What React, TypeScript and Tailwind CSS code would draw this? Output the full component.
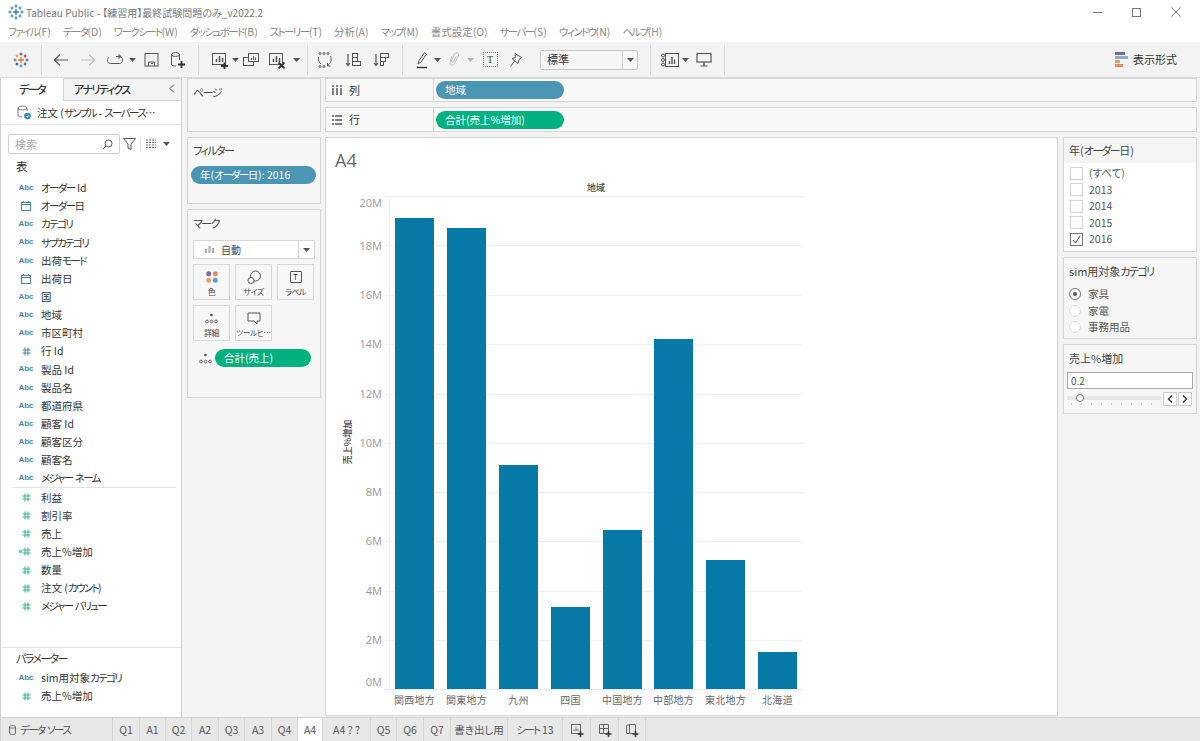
import type { ReactNode } from 'react';

const font = { fontFamily: '"Noto Sans CJK JP", "Noto Sans", sans-serif' };

const menus = [
  'ファイル(F)', 'データ(D)', 'ワークシート(W)', 'ダッシュボード(B)', 'ストーリー(T)', '分析(A)',
  'マップ(M)', '書式設定(O)', 'サーバー(S)', 'ウィンドウ(N)', 'ヘルプ(H)',
];

const dimensions: [string, string][] = [
  ['abc', 'オーダー Id'], ['date', 'オーダー日'], ['abc', 'カテゴリ'], ['abc', 'サブカテゴリ'],
  ['abc', '出荷モード'], ['date', '出荷日'], ['abc', '国'], ['abc', '地域'], ['abc', '市区町村'],
  ['numBlue', '行 Id'], ['abc', '製品 Id'], ['abc', '製品名'], ['abc', '都道府県'], ['abc', '顧客 Id'],
  ['abc', '顧客区分'], ['abc', '顧客名'], ['abc', 'メジャー ネーム'],
];

const measures = ['利益', '割引率', '売上', '売上%増加', '数量', '注文 (カウント)', 'メジャー バリュー'];

const bars = [
  { name: '関西地方', x: 395, top: 218 },
  { name: '関東地方', x: 447, top: 228 },
  { name: '九州', x: 499, top: 465 },
  { name: '四国', x: 551, top: 607 },
  { name: '中国地方', x: 603, top: 530 },
  { name: '中部地方', x: 654, top: 339 },
  { name: '東北地方', x: 706, top: 560 },
  { name: '北海道', x: 758, top: 652 },
];

const ticks = [
  { label: '20M', y: 196, textY: 207 },
  { label: '18M', y: 245, textY: 250 },
  { label: '16M', y: 295, textY: 299 },
  { label: '14M', y: 344, textY: 348 },
  { label: '12M', y: 394, textY: 398 },
  { label: '10M', y: 443, textY: 447 },
  { label: '8M', y: 492, textY: 496 },
  { label: '6M', y: 541, textY: 545 },
  { label: '4M', y: 591, textY: 595 },
  { label: '2M', y: 640, textY: 644 },
  { label: '0M', y: 689, textY: 686 },
];

const tabs = [
  { name: 'Q1', w: 'w-[27px]' }, { name: 'A1', w: 'w-[26px]' }, { name: 'Q2', w: 'w-[26px]' },
  { name: 'A2', w: 'w-[27px]' }, { name: 'Q3', w: 'w-[26px]' }, { name: 'A3', w: 'w-[27px]' },
  { name: 'Q4', w: 'w-[26px]' }, { name: 'A4', w: 'w-[25px]', active: true }, { name: 'A4 ? ?', w: 'w-[48px]' },
  { name: 'Q5', w: 'w-[26px]' }, { name: 'Q6', w: 'w-[27px]' }, { name: 'Q7', w: 'w-[27px]' },
  { name: '書き出し用', w: 'w-[57px]' }, { name: 'シート 13', w: 'w-[55px]' },
];

// katakana in the reference is much narrower than in Noto, so tighten just those runs
function Jp({ text }: { text: string }) {
  const parts = text.split(/([\u30A0-\u30FF]+)/);
  return (
    <>
      {parts.map((p, i) =>
        /^[\u30A0-\u30FF]/.test(p) ? (
          <span key={i} className="tracking-[-1.6px]">{p}</span>
        ) : (
          <span key={i}>{p}</span>
        ),
      )}
    </>
  );
}

function Caret({ className = '' }: { className?: string }) {
  return (
    <svg width="7" height="4" viewBox="0 0 7 4" className={`shrink-0 ${className}`}>
      <path d="M0 0H7L3.5 4Z" fill="#555" />
    </svg>
  );
}

function Plus({ cx, cy, r, color, sw = 1.2 }: { cx: number; cy: number; r: number; color: string; sw?: number }) {
  return <path d={`M${cx - r} ${cy}H${cx + r}M${cx} ${cy - r}V${cy + r}`} stroke={color} strokeWidth={sw} fill="none" />;
}

function Logo({ mono }: { mono?: boolean }) {
  const c = (v: string) => (mono ? '#2f7fb3' : v);
  return (
    <svg width="16" height="16" viewBox="0 0 16 16">
      <Plus cx={8} cy={8} r={3} color={c('#e8762d')} sw={1.4} />
      <Plus cx={8} cy={2} r={1.6} color={c('#2b5c8a')} />
      <Plus cx={8} cy={14} r={1.6} color={c('#5b879b')} />
      <Plus cx={2} cy={8} r={1.6} color={c('#59879b')} />
      <Plus cx={14} cy={8} r={1.6} color={c('#5b6591')} />
      <Plus cx={4} cy={4} r={1.4} color={c('#eb912b')} />
      <Plus cx={12} cy={4} r={1.4} color={c('#c72035')} />
      <Plus cx={4} cy={12} r={1.4} color={c('#1f447a')} />
      <Plus cx={12} cy={12} r={1.4} color={c('#2b5c8a')} />
    </svg>
  );
}

function Ico({ w = 18, h = 18, children, stroke = '#555' }: { w?: number; h?: number; children: ReactNode; stroke?: string }) {
  return (
    <svg width={w} height={h} viewBox={`0 0 ${w} ${h}`} fill="none" stroke={stroke} strokeWidth="1" className="shrink-0">
      {children}
    </svg>
  );
}

function Tool({ className, children }: { className: string; children: ReactNode }) {
  return <div className={`flex items-center justify-center h-full shrink-0 ${className}`}>{children}</div>;
}

function Sep() {
  return <div className="w-px h-[30px] bg-[#d8d8d8] shrink-0" />;
}

function Chart({ color }: { color: string }) {
  return (
    <>
      <rect x="1.5" y="2.5" width="13" height="11" />
      <path d="M5.5 11V8M8.5 11V5M11.5 11V7" stroke={color} strokeWidth="1.5" />
    </>
  );
}

function Toolbar() {
  return (
    <div className="h-[36px] flex items-center bg-[#f3f3f3] border-b border-[#d9d9d9] shrink-0">
      <Tool className="w-[41px]"><Logo /></Tool>
      <Sep />
      <Tool className="w-[24px] ml-[7px]">
        <Ico w={16} h={14}><path d="M15 7H1.5M7 1.5L1.5 7L7 12.5" strokeWidth="1.2" /></Ico>
      </Tool>
      <Tool className="w-[24px] ml-[3px]">
        <Ico w={16} h={14} stroke="#bdbdbd"><path d="M1 7H14.5M9 1.5L14.5 7L9 12.5" strokeWidth="1.2" /></Ico>
      </Tool>
      <Tool className="w-[24px] ml-[3px]">
        <Ico w={18} h={12}>
          <path d="M13 2.5H13.5C15.5 2.5 16.5 4 16.5 6C16.5 8 15.5 9.5 13.5 9.5H4.5C2.5 9.5 1.5 8 1.5 6C1.5 5 2 4 3 3.5M13 0.5V4.5L15 2.5Z" />
          <path d="M10 2.5H13" />
        </Ico>
      </Tool>
      <Tool className="w-[10px]"><Caret /></Tool>
      <Tool className="w-[24px] ml-[2px]">
        <Ico w={15} h={15}><rect x="1" y="1.5" width="13" height="12.5" /><path d="M4.5 14V10H10.5V14" /><path d="M7 11.5H9" /></Ico>
      </Tool>
      <Tool className="w-[24px] ml-[3px]">
        <Ico w={16} h={18}>
          <path d="M1.5 3.5C1.5 1 9.5 1 9.5 3.5V9M1.5 3.5V13C1.5 14.5 3.5 15 6 15M1.5 3.5C1.5 6 9.5 6 9.5 3.5" />
          <path d="M8 13.5H15M11.5 10V17" strokeWidth="1.8" stroke="#333" />
        </Ico>
      </Tool>
      <div className="w-[8px] shrink-0" />
      <Sep />
      <Tool className="w-[24px] ml-[9px]">
        <Ico w={18} h={18}><Chart color="#555" /><path d="M10 15H17M13.5 11.5V18" strokeWidth="1.8" stroke="#333" /></Ico>
      </Tool>
      <Tool className="w-[6px]"><Caret /></Tool>
      <Tool className="w-[24px] ml-[1px]">
        <Ico w={18} h={18}>
          <rect x="1.5" y="6.5" width="10" height="8" />
          <rect x="6.5" y="2.5" width="10" height="8" fill="#f3f3f3" />
          <path d="M9.5 9V7M11.5 9V5M13.5 9V6.5" />
        </Ico>
      </Tool>
      <Tool className="w-[24px] ml-[2px]">
        <Ico w={18} h={18}><Chart color="#555" /><path d="M10.5 11.5L16.5 17.5M16.5 11.5L10.5 17.5" strokeWidth="1.8" stroke="#333" /></Ico>
      </Tool>
      <Tool className="w-[10px] ml-[2px]"><Caret /></Tool>
      <div className="w-[6px] shrink-0" />
      <Sep />
      <Tool className="w-[24px] ml-[5px]">
        <Ico w={16} h={16}>
          <circle cx="3" cy="1.5" r="1" /><circle cx="7" cy="1.5" r="1" /><circle cx="11" cy="1.5" r="1" />
          <circle cx="3" cy="14.5" r="1" /><circle cx="7" cy="14.5" r="1" />
          <path d="M1.5 5C1 8 2 10.5 4 12M13.5 4C15 8 14 11 10.5 13.5M10.5 11V14H13.5" />
        </Ico>
      </Tool>
      <Tool className="w-[24px] ml-[4px]">
        <Ico w={16} h={16}>
          <path d="M3 2V13M1 11L3 13.5L5 11" strokeWidth="1.2" />
          <rect x="7.5" y="1.5" width="5" height="4" />
          <rect x="7.5" y="5.5" width="5" height="4" />
          <rect x="7.5" y="9.5" width="8" height="4" />
        </Ico>
      </Tool>
      <Tool className="w-[24px] ml-[4px]">
        <Ico w={16} h={16}>
          <path d="M3 2V13M1 11L3 13.5L5 11" strokeWidth="1.2" />
          <rect x="7.5" y="1.5" width="8" height="4" />
          <rect x="7.5" y="5.5" width="5" height="4" />
          <rect x="7.5" y="9.5" width="3" height="4" />
        </Ico>
      </Tool>
      <div className="w-[9px] shrink-0" />
      <Sep />
      <Tool className="w-[20px] ml-[9px]">
        <Ico w={12} h={18}>
          <path d="M2 13L3 9.5L8.5 1.5L10.5 3L5 11Z" />
          <path d="M1 16.5H11" strokeWidth="1.4" stroke="#333" />
        </Ico>
      </Tool>
      <Tool className="w-[10px]"><Caret /></Tool>
      <Tool className="w-[20px] ml-[2px]">
        <Ico w={12} h={17} stroke="#c0c0c0">
          <path d="M4 5L2 11C1.5 14 4.5 15.5 6 13L10.5 5C11.5 2 8 0.5 6.5 3L3.5 9.5C3 11 5 11.5 5.5 10.5L8.5 5" />
        </Ico>
      </Tool>
      <Tool className="w-[13px]"><Caret className="opacity-40" /></Tool>
      <Tool className="w-[20px] ml-[3px]">
        <div className="w-[15px] h-[15px] border border-dotted border-[#777] flex items-center justify-center text-[10px] leading-none text-[#444]" style={{ fontFamily: '"Liberation Serif", serif' }}>T</div>
      </Tool>
      <Tool className="w-[20px] ml-[6px]">
        <Ico w={14} h={16}>
          <path d="M6 1.5L12.5 5.5L10 7.5L9 11.5L3 6.5L6.5 5.5ZM5.5 9L1.5 14.5" />
        </Ico>
      </Tool>
      <div className="w-[98px] h-[20px] ml-[14px] shrink-0 flex items-center bg-[#f6f6f6] border border-[#c8c8c8] rounded-[2px]">
        <span className="flex-1 pl-[6px] text-[11px] text-[#333]">標準</span>
        <span className="w-[15px] h-full border-l border-[#d5d5d5] flex items-center justify-center"><Caret /></span>
      </div>
      <div className="w-[12px] shrink-0" />
      <Sep />
      <Tool className="w-[20px] ml-[9px]">
        <Ico w={18} h={14}>
          <circle cx="2" cy="2.5" r="1.5" /><circle cx="2" cy="7" r="1.5" /><circle cx="2" cy="11.5" r="1.5" />
          <rect x="4.5" y="0.5" width="13" height="13" />
          <path d="M8.5 11V8M11 11V4M13.5 11V6.5" strokeWidth="1.4" />
        </Ico>
      </Tool>
      <Tool className="w-[10px]"><Caret /></Tool>
      <Tool className="w-[20px] ml-[4px]">
        <Ico w={16} h={15}>
          <rect x="1" y="1.5" width="14" height="8.5" strokeWidth="1.2" />
          <path d="M8 10V14M4.5 14H11.5" strokeWidth="1.2" />
        </Ico>
      </Tool>
      <div className="w-[10px] shrink-0" />
      <Sep />
      <div className="flex-1" />
      <div className="flex items-center gap-[5px] mr-[23px]">
        <div className="flex flex-col gap-px">
          <div className="w-[10px] h-[3px] bg-[#7b6a9c]" />
          <div className="w-[13px] h-[3px] bg-[#85afcc]" />
          <div className="w-[5px] h-[3px] bg-[#ef9a5f]" />
          <div className="w-[8px] h-[3px] bg-[#e58a68]" />
        </div>
        <span className="text-[11px] text-[#333]">表示形式</span>
      </div>
    </div>
  );
}

function FieldIcon({ kind }: { kind: string }) {
  if (kind === 'abc') {
    return <span className="text-[8px] font-bold text-[#4a86a4]" style={{ fontFamily: '"Liberation Sans", sans-serif' }}>Abc</span>;
  }
  if (kind === 'date') {
    return (
      <Ico w={10} h={10} stroke="#4a86a4">
        <rect x="0.5" y="1.5" width="9" height="8" /><path d="M0.5 3.5H9.5M2.5 0V2M7.5 0V2" />
      </Ico>
    );
  }
  const stroke = kind === 'numBlue' ? '#4a86a4' : '#3fae86';
  return (
    <Ico w={9} h={9} stroke={stroke}>
      <path d="M3 0.5V8.5M6 0.5V8.5M0.5 3H8.5M0.5 6H8.5" />
    </Ico>
  );
}

function Field({ kind, name, calc }: { kind: string; name: string; calc?: boolean }) {
  return (
    <div className="flex items-center h-[18.15px] text-[10.5px] text-[#333] whitespace-nowrap">
      <div className="w-[40px] pl-[10px] flex items-center justify-center shrink-0 relative">
        {calc ? <span className="absolute left-[18px] top-[3px] w-[3px] h-[3px] bg-[#7cc8ac]" /> : null}
        <FieldIcon kind={kind} />
      </div>
      <span><Jp text={name} /></span>
    </div>
  );
}

function Sidebar() {
  return (
    <div className="w-[182px] h-full bg-white border-l border-r border-[#cfcfcf] flex flex-col shrink-0">
      <div className="flex h-[23px] shrink-0 text-[11px] font-medium text-[#333]">
        <div className="w-[62px] flex items-center justify-center"><span><Jp text="データ" /></span></div>
        <div className="flex-1 flex items-center bg-[#f3f3f3] border-l border-b border-t border-[#d4d4d4] pl-[10px] relative">
          <span><Jp text="アナリティクス" /></span>
          <svg width="6" height="9" viewBox="0 0 6 9" className="absolute right-[6px] top-[5px]" fill="none" stroke="#555">
            <path d="M5 0.5L1 4.5L5 8.5" />
          </svg>
        </div>
      </div>
      <div className="h-[24px] flex items-center border-b border-[#e3e3e3] shrink-0 pl-[16px] gap-[6px] text-[10.5px] text-[#333]">
        <svg width="14" height="15" viewBox="0 0 14 15" fill="none" stroke="#777">
          <path d="M1 3C1 0.5 10 0.5 10 3V6M1 3V10C1 11.5 3 12 5 12M1 3C1 5.5 10 5.5 10 3" />
          <circle cx="10.5" cy="11" r="3.3" fill="#2f86c2" stroke="none" />
          <path d="M9 11L10.2 12.2L12 10" stroke="#fff" />
        </svg>
        <span className="whitespace-nowrap"><Jp text="注文 (サンプル - スーパース…" /></span>
      </div>
      <div className="flex items-center h-[20px] mt-[9px] pl-[7px] shrink-0">
        <div className="w-[112px] h-[20px] border border-[#cfcfcf] rounded-[2px] flex items-center justify-between px-[6px] text-[11px] text-[#aaa]">
          検索
          <svg width="11" height="11" viewBox="0 0 11 11" fill="none" stroke="#555">
            <circle cx="6.5" cy="4.5" r="3.5" /><path d="M4 7L1 10" />
          </svg>
        </div>
        <svg width="13" height="12" viewBox="0 0 13 12" fill="none" stroke="#555" className="ml-[3px]">
          <path d="M0.5 0.5H12.5L8 6V11.5L5 10V6Z" />
        </svg>
        <div className="w-px h-[15px] bg-[#ddd] ml-[4px]" />
        <svg width="12" height="10" viewBox="0 0 12 10" stroke="#666" className="ml-[4px]">
          <path d="M1 1H11M1 3.5H11M1 6H11M1 8.5H11" strokeDasharray="2 1" />
        </svg>
        <Caret className="ml-[6px]" />
      </div>
      <div className="h-[24px] mt-[1px] pl-[15px] flex items-center text-[11.5px] text-[#333] shrink-0">表</div>
      <div className="flex flex-col shrink-0">
        {dimensions.map(([kind, name]) => (
          <Field key={name} kind={kind} name={name} />
        ))}
      </div>
      <div className="h-px bg-[#e3e3e3] ml-[13px] mr-[5px] shrink-0" />
      <div className="flex flex-col shrink-0">
        {measures.map((name) => (
          <Field key={name} kind="num" name={name} calc={name === '売上%増加'} />
        ))}
      </div>
      <div className="flex-1" />
      <div className="border-t border-[#e3e3e3] h-[70px] shrink-0">
        <div className="h-[21px] pl-[15px] flex items-center text-[11px] text-[#333]"><span><Jp text="パラメーター" /></span></div>
        <Field kind="abc" name="sim用対象カテゴリ" />
        <Field kind="num" name="売上%増加" />
      </div>
    </div>
  );
}

function Pill({ color, children, className = '' }: { color: string; children: ReactNode; className?: string }) {
  return (
    <div className={`h-[18px] rounded-full flex items-center pl-[9px] text-[10.5px] text-white whitespace-nowrap ${color} ${className}`}>
      <span>{children}</span>
    </div>
  );
}

function MarkButton({ label, small, children }: { label: string; small?: boolean; children: ReactNode }) {
  return (
    <div className="w-[37px] h-[36px] bg-[#f7f7f7] border border-[#d8d8d8] flex flex-col items-center pt-[4px]">
      <div className="h-[16px] flex items-center justify-center">{children}</div>
      <span className={`leading-[14px] text-[#444] whitespace-nowrap ${small ? 'text-[7.5px] tracking-[-0.2px]' : 'text-[8px] tracking-[-0.6px]'}`}>{label}</span>
    </div>
  );
}

function Dots() {
  return (
    <Ico w={13} h={11} stroke="#666">
      <circle cx="6.5" cy="2" r="1.3" fill="#555" stroke="none" />
      <circle cx="2" cy="8.5" r="1.4" /><circle cx="6.5" cy="8.5" r="1.4" /><circle cx="11" cy="8.5" r="1.4" />
    </Ico>
  );
}

function CardsColumn() {
  return (
    <div className="w-[134px] flex flex-col gap-[5px] ml-[5px] shrink-0">
      <div className="h-[54px] bg-[#f6f6f6] border border-[#d4d4d4] px-[5px] pt-[5px] text-[11px] text-[#444]"><Jp text="ページ" /></div>
      <div className="h-[67px] bg-[#f6f6f6] border border-[#d4d4d4] flex flex-col">
        <div className="px-[5px] pt-[4px] h-[28px] text-[11px] text-[#444]"><Jp text="フィルター" /></div>
        <Pill color="bg-[#4a95b3]" className="w-[125px] ml-[3px]"><Jp text="年(オーダー日): 2016" /></Pill>
      </div>
      <div className="h-[189px] bg-[#f6f6f6] border border-[#d4d4d4] flex flex-col">
        <div className="px-[5px] pt-[5px] h-[30px] text-[11px] text-[#444]"><Jp text="マーク" /></div>
        <div className="mx-[5px] h-[19px] bg-white border border-[#d4d4d4] rounded-[1px] flex items-center">
          <svg width="9" height="7" viewBox="0 0 9 7" className="ml-[11px]" fill="#aaa">
            <rect x="0" y="3" width="2" height="4" /><rect x="3.5" y="0" width="2" height="7" /><rect x="7" y="2" width="2" height="5" />
          </svg>
          <span className="flex-1 pl-[7px] text-[10px] text-[#444]">自動</span>
          <span className="w-[16px] h-full border-l border-[#d4d4d4] flex items-center justify-center"><Caret /></span>
        </div>
        <div className="grid grid-cols-[37px_37px_37px] gap-x-[5px] gap-y-[5px] mx-[5px] mt-[5px]">
          <MarkButton label="色">
            <svg width="12" height="12" viewBox="0 0 12 12">
              <circle cx="2.7" cy="2.7" r="2.5" fill="#7b6a9c" /><circle cx="9.3" cy="2.7" r="2.5" fill="#e58a5f" />
              <circle cx="2.7" cy="9.3" r="2.5" fill="#ef9a5f" /><circle cx="9.3" cy="9.3" r="2.5" fill="#5f9bcb" />
            </svg>
          </MarkButton>
          <MarkButton label="サイズ">
            <Ico w={14} h={14}><circle cx="8.5" cy="6" r="5" /><circle cx="4" cy="10.5" r="3" fill="#f7f7f7" /></Ico>
          </MarkButton>
          <MarkButton label="ラベル">
            <div className="w-[12px] h-[12px] border border-[#555] rounded-[1px] flex items-center justify-center text-[8px] leading-none text-[#333]">T</div>
          </MarkButton>
          <MarkButton label="詳細"><Dots /></MarkButton>
          <MarkButton label="ツールヒ…" small>
            <Ico w={14} h={13}><path d="M1 1H13V9H10V12L7 9H1Z" /></Ico>
          </MarkButton>
        </div>
        <div className="flex items-center mt-[8px] pl-[11px]">
          <Dots />
          <Pill color="bg-[#00b180]" className="w-[96px] ml-[3px]">合計(売上)</Pill>
        </div>
      </div>
    </div>
  );
}

function Shelf({ label, icon, className, children }: { label: string; icon: ReactNode; className: string; children: ReactNode }) {
  return (
    <div className={`flex bg-[#f8f8f8] border border-[#d4d4d4] ${className}`}>
      <div className="w-[108px] flex items-center pl-[6px] gap-[7px] text-[11px] text-[#333] border-r border-[#d4d4d4]">
        {icon}
        {label}
      </div>
      <div className="flex items-center pl-[2px]">{children}</div>
    </div>
  );
}

function Viz() {
  return (
    <div className="w-[733px] h-[579px] bg-white border border-[#d4d4d4] flex flex-col shrink-0">
      <div className="h-[44px] pl-[9px] pt-[8px] text-[18px] leading-[28px] text-[#666] shrink-0" style={{ fontFamily: '"Open Sans", sans-serif' }}>A4</div>
      <svg width="731" height="533" viewBox="326 182 731 533" className="block" style={font}>
        {ticks.map((t) => (
          <g key={t.label}>
            <path d={`M385 ${t.y + 0.5}H803`} stroke="#f1f1f1" />
            <text x="382" y={t.textY} textAnchor="end" fontSize="11" fill="#999" style={{ fontFamily: '"Open Sans", sans-serif' }}>{t.label}</text>
          </g>
        ))}
        <path d="M389.5 196V689" stroke="#efefef" />
        {bars.map((b) => (
          <rect key={b.name} x={b.x} y={b.top} width={39} height={689 - b.top} fill="#0779a6" />
        ))}
        <path d="M385 689.5H803" stroke="#e9e9e9" />
        {bars.map((b) => (
          <text key={b.name} x={b.x + 19.5} y={704} textAnchor="middle" fontSize="10" fill="#666" letterSpacing="0.3">{b.name}</text>
        ))}
        <text x="596" y="191" textAnchor="middle" fontSize="9" fontWeight="500" fill="#444">地域</text>
        <text transform="translate(351 442) rotate(-90)" textAnchor="middle" fontSize="9" fontWeight="500" fill="#444">売上%増加</text>
      </svg>
    </div>
  );
}

function Check({ label, checked }: { label: string; checked?: boolean }) {
  return (
    <div className="flex items-center h-[16.5px] gap-[6px] pl-[6px] text-[10.5px] text-[#555]">
      <div className={`w-[13px] h-[13px] bg-white border flex items-center justify-center ${checked ? 'border-[#777]' : 'border-[#d4d4d4]'}`}>
        {checked ? (
          <svg width="9" height="9" viewBox="0 0 9 9" fill="none" stroke="#444"><path d="M1 5L3.5 8L8 1" /></svg>
        ) : null}
      </div>
      <span>{label}</span>
    </div>
  );
}

function Radio({ label, checked }: { label: string; checked?: boolean }) {
  return (
    <div className="flex items-center h-[16.5px] gap-[7px] pl-[5px] text-[10.5px] text-[#555]">
      <div className={`w-[12px] h-[12px] rounded-full bg-white border flex items-center justify-center ${checked ? 'border-[#777]' : 'border-[#ddd]'}`}>
        {checked ? <div className="w-[4px] h-[4px] rounded-full bg-[#555]" /> : null}
      </div>
      <span>{label}</span>
    </div>
  );
}

function StepButton({ d }: { d: string }) {
  return (
    <div className="w-[14px] h-[14px] bg-white border border-[#ccc] flex items-center justify-center">
      <svg width="6" height="8" viewBox="0 0 6 8" fill="none" stroke="#333" strokeWidth="1.4"><path d={d} /></svg>
    </div>
  );
}

function RightColumn() {
  return (
    <div className="w-[134px] flex flex-col gap-[5px] ml-[5px] shrink-0">
      <div className="h-[115px] bg-white border border-[#d4d4d4]">
        <div className="h-[25px] bg-[#f5f5f5] pl-[5px] flex items-center text-[11px] text-[#444]"><span><Jp text="年(オーダー日)" /></span></div>
        <div className="pt-[2px]">
          <Check label="(すべて)" />
          <Check label="2013" />
          <Check label="2014" />
          <Check label="2015" />
          <Check label="2016" checked />
        </div>
      </div>
      <div className="h-[82px] bg-[#f6f6f6] border border-[#d4d4d4]">
        <div className="h-[27px] pl-[5px] flex items-center text-[11px] text-[#444]"><span><Jp text="sim用対象カテゴリ" /></span></div>
        <div className="pt-[1px]">
          <Radio label="家具" checked />
          <Radio label="家電" />
          <Radio label="事務用品" />
        </div>
      </div>
      <div className="h-[70px] bg-[#f6f6f6] border border-[#d4d4d4]">
        <div className="h-[27px] pl-[5px] flex items-center text-[11px] text-[#444]">売上%増加</div>
        <div className="mx-[3px] h-[17px] bg-white border border-[#a8a8a8] pl-[3px] flex items-center text-[10px] text-[#555]">0.2</div>
        <div className="flex items-start mx-[3px] mt-[3px]">
          <div className="w-[94px] h-[14px] relative">
            <div className="absolute left-0 right-0 top-[4px] h-[4px] bg-[#e6e6e6]" />
            <div className="absolute left-[9px] top-[2px] w-[8px] h-[8px] rounded-full bg-white border border-[#777]" />
            <div className="absolute left-[4px] right-[2px] top-[11px] h-[2px] bg-[repeating-linear-gradient(90deg,#ccc_0,#ccc_1px,transparent_1px,transparent_10px)]" />
          </div>
          <div className="flex gap-px ml-[2px]">
            <StepButton d="M5 0.5L1.5 4L5 7.5" />
            <StepButton d="M1 0.5L4.5 4L1 7.5" />
          </div>
        </div>
      </div>
    </div>
  );
}

function TabIcon({ kind }: { kind: 'sheet' | 'dash' | 'story' }) {
  return (
    <Ico w={14} h={14} stroke="#666">
      {kind === 'sheet' ? <><rect x="1.5" y="1.5" width="9" height="9" /><path d="M4 8V6.5M6 8V4.5M8 8V6" /></> : null}
      {kind === 'dash' ? <path d="M1.5 1.5H10.5V10.5H1.5ZM1.5 5.5H10.5M5.5 1.5V10.5" /> : null}
      {kind === 'story' ? <path d="M1.5 2.5L4.5 1.5V10.5L1.5 10.5ZM4.5 1.5H10.5V9M4.5 10.5H8" /> : null}
      <path d="M7.5 11H13.5M10.5 8V14" strokeWidth="1.5" stroke="#333" />
    </Ico>
  );
}

function TabBar() {
  return (
    <div className="h-[24px] flex bg-[#e8e8e8] border-t border-[#cfcfcf] shrink-0 text-[10.5px] text-[#555] overflow-hidden">
      <div className="w-[113px] flex items-center pl-[8px] gap-[4px] border-l border-r border-[#d2d2d2] whitespace-nowrap shrink-0">
        <svg width="7" height="10" viewBox="0 0 7 10" fill="none" stroke="#666">
          <path d="M0.5 2C0.5 0 6.5 0 6.5 2V8C6.5 10 0.5 10 0.5 8ZM0.5 2C0.5 3.5 6.5 3.5 6.5 2" />
        </svg>
        <span><Jp text="データ ソース" /></span>
      </div>
      {tabs.map((t) => (
        <div key={t.name} className={`${t.w} flex items-center justify-center border-r border-[#d6d6d6] whitespace-nowrap shrink-0 ${t.active ? 'bg-white' : ''}`}>
          <span><Jp text={t.name} /></span>
        </div>
      ))}
      <div className="w-[28px] flex items-center justify-center border-r border-[#d6d6d6] shrink-0"><TabIcon kind="sheet" /></div>
      <div className="w-[28px] flex items-center justify-center border-r border-[#d6d6d6] shrink-0"><TabIcon kind="dash" /></div>
      <div className="w-[27px] flex items-center justify-center border-r border-[#d6d6d6] shrink-0"><TabIcon kind="story" /></div>
    </div>
  );
}

export default function App() {
  return (
    <div className="w-[1200px] h-[741px] flex flex-col bg-[#f3f3f3] overflow-hidden [font-feature-settings:'palt']" style={font}>
      <div className="h-[21px] bg-white flex items-center shrink-0 pl-[8px] pt-[3px] relative">
        <Logo mono />
        <span className="ml-[2px] text-[10px] text-[#777] whitespace-nowrap">Tableau Public - 【練習用】最終試験問題のみ_v2022.2</span>
        <div className="ml-auto flex items-center">
          <div className="w-[39px] flex justify-center"><div className="w-[9px] h-px bg-[#777]" /></div>
          <div className="w-[39px] flex justify-center"><div className="w-[9px] h-[9px] border border-[#777]" /></div>
          <div className="w-[39px] flex justify-center">
            <svg width="10" height="10" viewBox="0 0 10 10" stroke="#777"><path d="M0.5 0.5L9.5 9.5M9.5 0.5L0.5 9.5" /></svg>
          </div>
          <div className="w-[5px]" />
        </div>
      </div>
      <div className="h-[21px] bg-white flex items-center gap-[12px] pl-[8px] shrink-0 text-[10.5px] text-[#888] whitespace-nowrap">
        {menus.map((m) => (
          <span key={m}><Jp text={m} /></span>
        ))}
      </div>
      <Toolbar />
      <div className="flex-1 min-h-0 flex">
        <Sidebar />
        <CardsColumn />
        <div className="flex flex-col gap-[5px] ml-[4px] w-[872px] shrink-0">
          <Shelf
            label="列"
            className="h-[24px]"
            icon={
              <svg width="10" height="10" viewBox="0 0 10 10" stroke="#555" strokeWidth="1.5">
                <path d="M1 3V10M5 3V10M9 3V10M1 0V2M5 0V2M9 0V2" />
              </svg>
            }
          >
            <Pill color="bg-[#4a95b3]" className="w-[128px]">地域</Pill>
          </Shelf>
          <Shelf
            label="行"
            className="h-[25px]"
            icon={
              <svg width="10" height="10" viewBox="0 0 10 10" stroke="#555" strokeWidth="1.4">
                <path d="M3 1H10M3 5H10M3 9H10M0 1H2M0 5H2M0 9H2" />
              </svg>
            }
          >
            <Pill color="bg-[#00b180]" className="w-[128px]">合計(売上%増加)</Pill>
          </Shelf>
          <div className="flex">
            <Viz />
            <RightColumn />
          </div>
        </div>
      </div>
      <TabBar />
    </div>
  );
}
